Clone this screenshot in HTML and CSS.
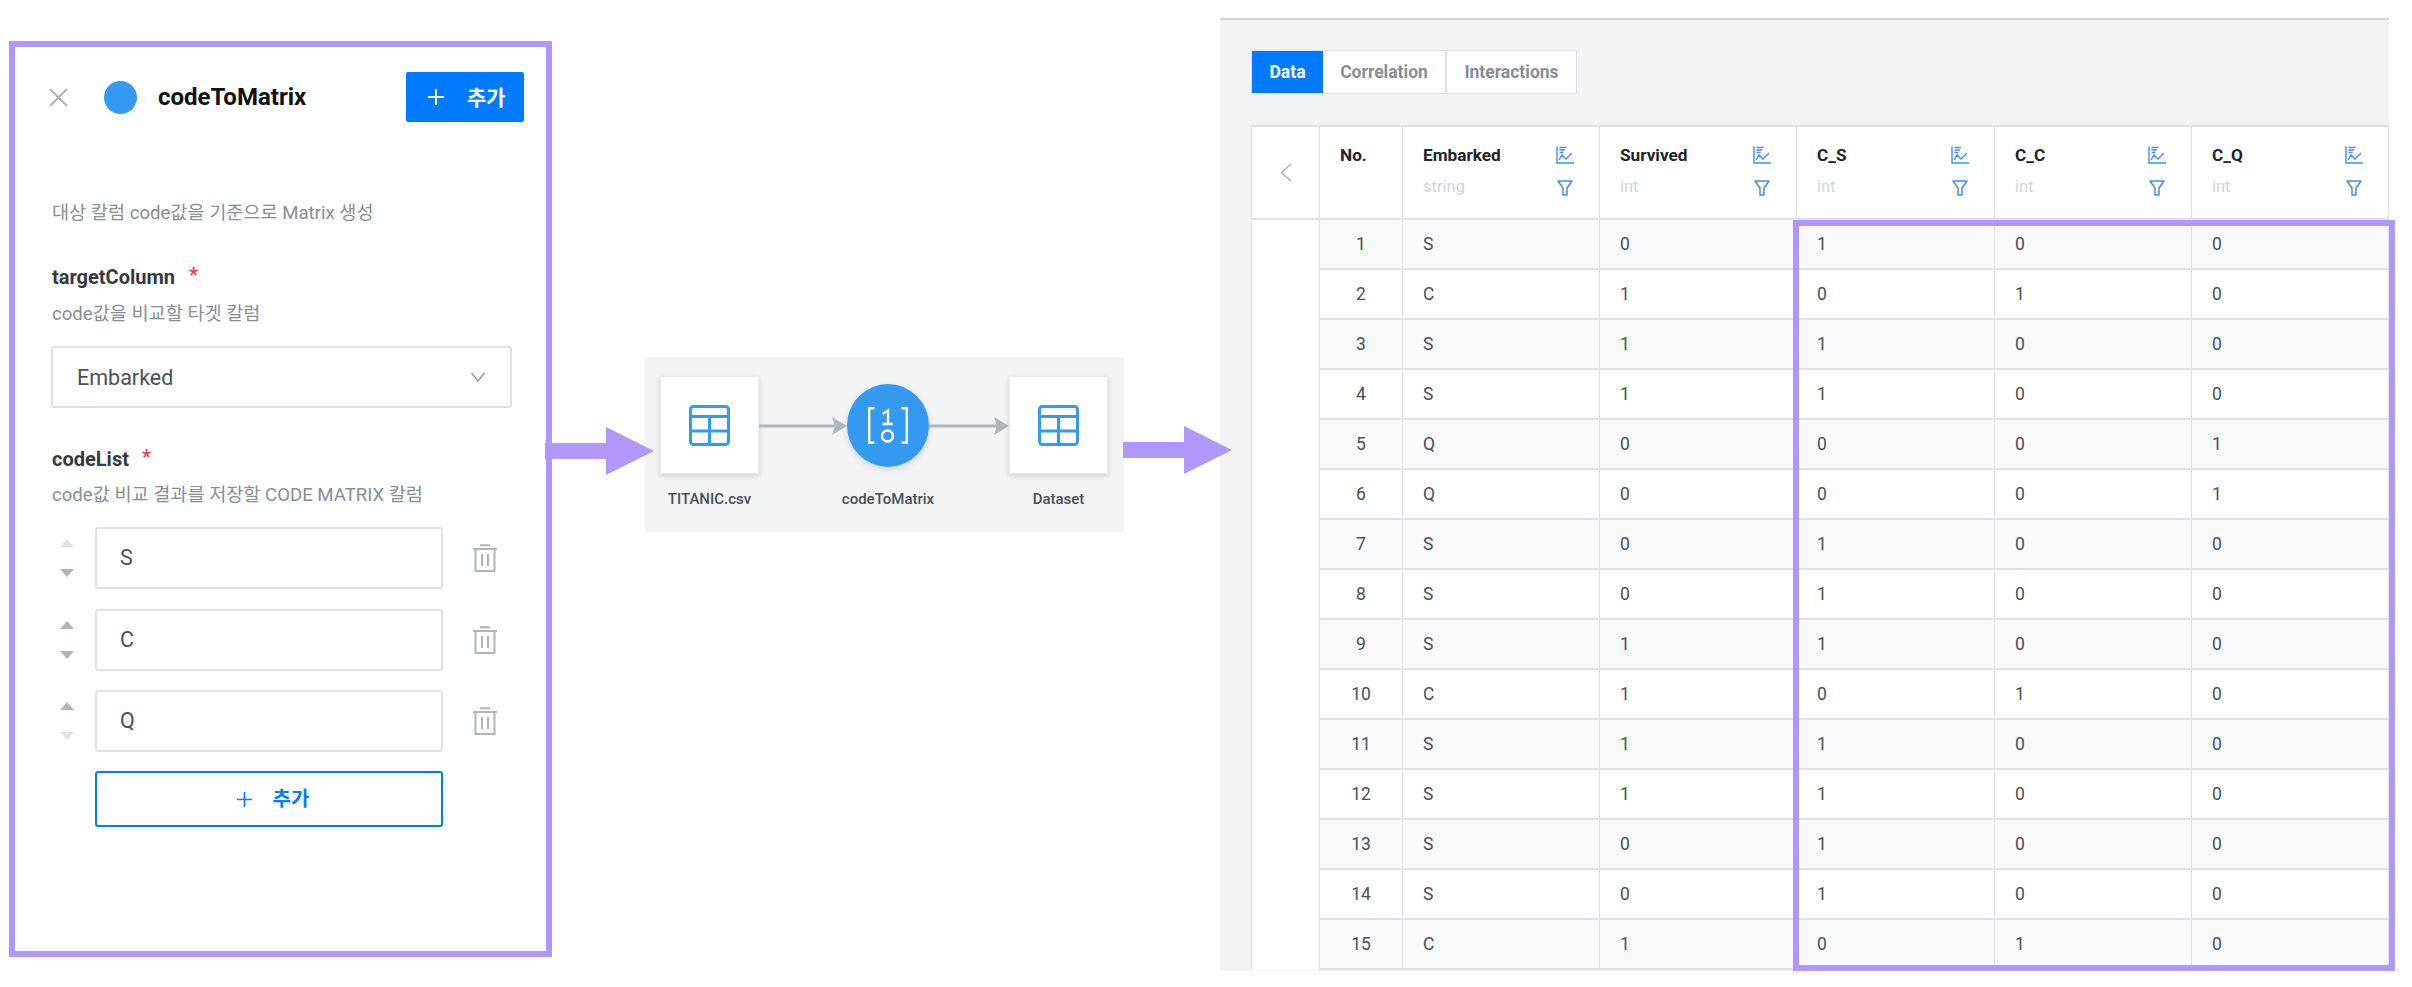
FILE: index.html
```html
<!DOCTYPE html>
<html lang="ko">
<head>
<meta charset="utf-8">
<title>codeToMatrix</title>
<link rel="stylesheet" href="styles.css">
</head>
<body>
<svg class="defs" width="0" height="0" aria-hidden="true">
  <symbol id="i-chart" viewBox="0 0 18 18"><path d="M1 .5V17H18M3.5 1.5H10M3.5 4H9M3.5 6.5H7.5M3 14L6 9L10 13L16 7" fill="none" stroke="currentColor" stroke-width="1.4"/></symbol>
  <symbol id="i-funnel" viewBox="0 0 16 16"><path d="M1 1H15L10 8V15H6V8Z" fill="none" stroke="currentColor" stroke-width="1.5" stroke-linejoin="round"/></symbol>
  <symbol id="i-trash" viewBox="0 0 24 28"><path d="M7 1.2H17M0 5H24M2.5 5V27H21.5V5M9 10V22M15 10V22" fill="none" stroke="currentColor" stroke-width="2"/></symbol>
  <symbol id="i-table" viewBox="0 0 41 41"><rect x="1.5" y="1.5" width="38" height="38" rx="3" fill="#fff" stroke="currentColor" stroke-width="3"/><path d="M1 11.5H40M1 26H40M20.5 11.5V40" fill="none" stroke="currentColor" stroke-width="3"/></symbol>
</svg>
<main class="canvas">
  <section class="panel">
    <header class="panel-head">
      <svg class="close" width="19" height="19" viewBox="0 0 19 19"><path d="M1 1L18 18M18 1L1 18" fill="none" stroke="#adb5bd" stroke-width="2.2"/></svg>
      <span class="dot"></span>
      <h1 class="title">codeToMatrix</h1>
      <button class="btn-primary"><svg width="16" height="16" viewBox="0 0 16 16"><path d="M8 0V16M0 8H16" stroke="#fff" stroke-width="2"/></svg><span class="btn-text">추가</span></button>
    </header>
    <p class="desc first">대상 칼럼 code값을 기준으로 Matrix 생성</p>
    <div class="label l1">targetColumn<span class="req r1">*</span></div>
    <p class="desc sub">code값을 비교할 타겟 칼럼</p>
    <div class="select"><span>Embarked</span><svg width="14" height="10" viewBox="0 0 14 10"><path d="M.5 1L7 9L13.5 1" fill="none" stroke="#868e96" stroke-width="1.3"/></svg></div>
    <div class="label l2">codeList<span class="req r2">*</span></div>
    <p class="desc sub s2">code값 비교 결과를 저장할 CODE MATRIX 칼럼</p>
    <div class="list">
      <div class="item">
        <div class="sort"><i class="up off"></i><i class="down"></i></div>
        <div class="input">S</div>
        <svg class="trash"><use href="#i-trash"/></svg>
      </div>
      <div class="item">
        <div class="sort"><i class="up"></i><i class="down"></i></div>
        <div class="input">C</div>
        <svg class="trash"><use href="#i-trash"/></svg>
      </div>
      <div class="item">
        <div class="sort"><i class="up"></i><i class="down off"></i></div>
        <div class="input">Q</div>
        <svg class="trash"><use href="#i-trash"/></svg>
      </div>
    </div>
    <button class="btn-outline"><svg width="15" height="15" viewBox="0 0 15 15"><path d="M7.5 0V15M0 7.5H15" stroke="#007bff" stroke-width="1.6"/></svg><span class="btn-text">추가</span></button>
  </section>

  <section class="flow">
    <div class="step">
      <div class="stage"><div class="node"><svg class="table-icon"><use href="#i-table"/></svg></div></div>
      <div class="step-label">TITANIC.csv</div>
    </div>
    <svg class="link" width="88" height="98" viewBox="0 0 88 98"><path d="M0 50H80" stroke="#adb5bd" stroke-width="3"/><path d="M88 50L73 41L76 50L73 59Z" fill="#adb5bd"/></svg>
    <div class="step mid">
      <div class="stage"><div class="circle">
        <svg width="40" height="37" viewBox="0 0 40 37"><path d="M6.5 1.2H1.2V35.8H6.5M33.5 1.2H38.8V35.8H33.5M14.5 7L20 3.5V17M14.5 17H25" fill="none" stroke="#fff" stroke-width="2.4"/><circle cx="19.5" cy="29" r="5.5" fill="none" stroke="#fff" stroke-width="2.4"/></svg>
      </div></div>
      <div class="step-label">codeToMatrix</div>
    </div>
    <svg class="link" width="80" height="98" viewBox="0 0 80 98"><path d="M0 50H72" stroke="#adb5bd" stroke-width="3"/><path d="M80 50L65 41L68 50L65 59Z" fill="#adb5bd"/></svg>
    <div class="step">
      <div class="stage"><div class="node"><svg class="table-icon"><use href="#i-table"/></svg></div></div>
      <div class="step-label">Dataset</div>
    </div>
  </section>

  <section class="result">
    <nav class="tabs">
      <span class="tab active">Data</span>
      <span class="tab t2">Correlation</span>
      <span class="tab t3">Interactions</span>
    </nav>
    <div class="grid">
      <div class="back-cell"><svg width="12" height="19" viewBox="0 0 12 19"><path d="M11 1L1.5 9.5L11 18" fill="none" stroke="#adb5bd" stroke-width="1.5"/></svg></div>
      <div class="hcell no">No.</div>
      <div class="hcell"><div class="hname">Embarked<small>string</small></div><div class="hicons"><svg class="ic-chart"><use href="#i-chart"/></svg><svg class="ic-funnel"><use href="#i-funnel"/></svg></div></div>
      <div class="hcell"><div class="hname">Survived<small>int</small></div><div class="hicons"><svg class="ic-chart"><use href="#i-chart"/></svg><svg class="ic-funnel"><use href="#i-funnel"/></svg></div></div>
      <div class="hcell"><div class="hname">C_S<small>int</small></div><div class="hicons"><svg class="ic-chart"><use href="#i-chart"/></svg><svg class="ic-funnel"><use href="#i-funnel"/></svg></div></div>
      <div class="hcell"><div class="hname">C_C<small>int</small></div><div class="hicons"><svg class="ic-chart"><use href="#i-chart"/></svg><svg class="ic-funnel"><use href="#i-funnel"/></svg></div></div>
      <div class="hcell"><div class="hname">C_Q<small>int</small></div><div class="hicons"><svg class="ic-chart"><use href="#i-chart"/></svg><svg class="ic-funnel"><use href="#i-funnel"/></svg></div></div>
      <div class="spacer"></div>
      <div class="rows">
        <div class="row"><span>1</span><span>S</span><span>0</span><span>1</span><span>0</span><span>0</span></div>
        <div class="row"><span>2</span><span>C</span><span>1</span><span>0</span><span>1</span><span>0</span></div>
        <div class="row"><span>3</span><span>S</span><span>1</span><span>1</span><span>0</span><span>0</span></div>
        <div class="row"><span>4</span><span>S</span><span>1</span><span>1</span><span>0</span><span>0</span></div>
        <div class="row"><span>5</span><span>Q</span><span>0</span><span>0</span><span>0</span><span>1</span></div>
        <div class="row"><span>6</span><span>Q</span><span>0</span><span>0</span><span>0</span><span>1</span></div>
        <div class="row"><span>7</span><span>S</span><span>0</span><span>1</span><span>0</span><span>0</span></div>
        <div class="row"><span>8</span><span>S</span><span>0</span><span>1</span><span>0</span><span>0</span></div>
        <div class="row"><span>9</span><span>S</span><span>1</span><span>1</span><span>0</span><span>0</span></div>
        <div class="row"><span>10</span><span>C</span><span>1</span><span>0</span><span>1</span><span>0</span></div>
        <div class="row"><span>11</span><span>S</span><span>1</span><span>1</span><span>0</span><span>0</span></div>
        <div class="row"><span>12</span><span>S</span><span>1</span><span>1</span><span>0</span><span>0</span></div>
        <div class="row"><span>13</span><span>S</span><span>0</span><span>1</span><span>0</span><span>0</span></div>
        <div class="row"><span>14</span><span>S</span><span>0</span><span>1</span><span>0</span><span>0</span></div>
        <div class="row"><span>15</span><span>C</span><span>1</span><span>0</span><span>1</span><span>0</span></div>
      </div>
    </div>
    <div class="highlight"></div>
  </section>

  <svg class="pointer p-left" width="109" height="48" viewBox="0 0 109 48"><path d="M0 16H61V0L109 24L61 48V32H0Z" fill="#b197fc"/></svg>
  <svg class="pointer p-right" width="109" height="48" viewBox="0 0 109 48"><path d="M0 16H61V0L109 24L61 48V32H0Z" fill="#b197fc"/></svg>
</main>
</body>
</html>
```
FILE: styles.css
```css
* { box-sizing: border-box; }
html, body { margin: 0; padding: 0; background: #fff; }
body {
  width: 2412px;
  height: 987px;
  overflow: hidden;
  font-family: Roboto, "Noto Sans CJK KR", "Noto Sans", sans-serif;
  color: #495057;
}
.defs { position: absolute; }
.canvas { position: relative; display: flex; align-items: flex-start; padding-left: 9px; height: 987px; }

/* left settings panel */
.panel {
  width: 543px;
  height: 916px;
  margin-top: 41px;
  padding: 25px 22px 0 37px;
  border: 6px solid #b197fc;
  flex: none;
}
.panel-head { display: flex; align-items: center; height: 50px; }
.close { margin-left: -3px; }
.dot { width: 33px; height: 33px; border-radius: 50%; background: #339af0; margin-left: 36px; }
.title { margin: 0 0 0 21px; font-size: 24px; font-weight: 700; color: #111; line-height: 30px; }
.btn-primary {
  margin-left: auto;
  width: 118px;
  height: 50px;
  background: #007bff;
  border: 0;
  border-radius: 2px;
  color: #fff;
  font: 700 21px Roboto, "Noto Sans CJK KR", sans-serif;
  display: flex;
  align-items: center;
  padding: 0 0 0 22px;
  gap: 23px;
}
.btn-text { padding-bottom: 3px; }
.desc { margin: 0; font-size: 18.6px; line-height: 24px; color: #868e96; white-space: nowrap; }
.desc.first { margin-top: 79px; }
.desc.sub { margin-top: 13px; }
.desc.s2 { margin-top: 12px; }
.label { font-size: 20px; font-weight: 700; line-height: 24px; color: #343a40; white-space: nowrap; }
.l1 { margin-top: 40px; }
.l2 { margin-top: 39px; }
.req { color: #f03e3e; font-weight: 700; position: relative; top: -2px; font-size: 20px; }
.r1 { margin-left: 14px; }
.r2 { margin-left: 13px; }
.select {
  margin: 20px 0 0 -1px;
  width: 461px;
  height: 62px;
  border: 2px solid #dee2e6;
  border-radius: 3px;
  padding: 0 25px 0 24px;
  display: flex;
  align-items: center;
  justify-content: space-between;
  font-size: 21.5px;
  color: #495057;
}
.list { margin-top: 20px; display: flex; flex-direction: column; gap: 19.5px; }
.item { display: flex; align-items: center; padding-left: 8px; }
.sort { width: 14px; display: flex; flex-direction: column; gap: 22px; }
.sort i { display: block; width: 0; height: 0; border-left: 7px solid transparent; border-right: 7px solid transparent; }
.up { border-bottom: 8px solid #adb5bd; }
.down { border-top: 8px solid #adb5bd; }
.up.off { border-bottom-color: #dee2e6; }
.down.off { border-top-color: #dee2e6; }
.input {
  margin-left: 21px;
  width: 348px;
  height: 62px;
  border: 2px solid #dee2e6;
  border-radius: 3px;
  padding-left: 23px;
  line-height: 58px;
  font-size: 21.5px;
}
.trash { margin-left: 30px; width: 24px; height: 28px; color: #adb5bd; }
.btn-outline {
  margin: 19px 0 0 43px;
  width: 348px;
  height: 56px;
  background: #fff;
  border: 2px solid #007bff;
  border-radius: 3px;
  color: #007bff;
  font: 700 20px Roboto, "Noto Sans CJK KR", sans-serif;
  display: flex;
  align-items: center;
  justify-content: center;
  padding: 0 0 0 8px;
  gap: 21px;
}

/* flow diagram */
.flow {
  flex: none;
  width: 479px;
  height: 175px;
  margin: 357px 0 0 93px;
  padding: 19px 16px 0 15px;
  background: #f1f3f5;
  display: flex;
}
.step { width: 99px; display: flex; flex-direction: column; align-items: center; }
.step.mid { width: 82px; }
.stage { height: 98px; display: flex; align-items: center; justify-content: center; }
.node {
  width: 99px;
  height: 98px;
  background: #fff;
  border: 1px solid #e9ecef;
  box-shadow: 0 2px 5px rgba(0, 0, 0, .14);
  display: flex;
  align-items: center;
  justify-content: center;
}
.table-icon { width: 41px; height: 41px; color: #339af0; }
.circle {
  width: 82px;
  height: 83px;
  border-radius: 50%;
  background: #339af0;
  box-shadow: 0 3px 6px rgba(0, 0, 0, .12);
  display: flex;
  align-items: center;
  justify-content: center;
}
.link { flex: none; }
.step-label { margin-top: 15px; font-size: 15px; line-height: 20px; font-weight: 500; color: #495057; white-space: nowrap; }

/* data panel */
.result {
  position: relative;
  flex: none;
  width: 1169px;
  height: 953px;
  margin: 18px 0 0 96px;
  padding: 30px 0 0 31px;
  background: #f1f3f5;
  border-top: 2px solid #ced4da;
}
.tabs { display: flex; width: 326px; height: 44px; background: #fff; border: 1px solid #dee2e6; border-radius: 2px; }
.tab { display: flex; align-items: center; justify-content: center; font-size: 17.5px; font-weight: 700; color: #868e96; }
.tab.active { width: 71px; background: #007bff; color: #fff; }
.t2 { width: 124px; border-right: 2px solid #dee2e6; }
.t3 { flex: 1; }
.grid {
  margin-top: 31px;
  display: grid;
  grid-template-columns: 68px 83px 197px 197px 198px 197px 197px;
  grid-template-rows: 93px 750px;
  width: 1138px;
  background: #fff;
  border-top: 2px solid #dee2e6;
  border-left: 1px solid #dee2e6;
}
.back-cell, .hcell {
  border-right: 1.5px solid #dee2e6;
  border-bottom: 2px solid #dee2e6;
}
.back-cell { display: flex; align-items: center; justify-content: center; }
.hcell { display: flex; justify-content: space-between; padding: 16px 25px 0 20px; font-size: 17.2px; font-weight: 700; line-height: 24px; color: #212529; }
.hcell.no { justify-content: flex-start; }
.hname small { display: block; margin-top: 8px; font-size: 16.5px; font-weight: 400; color: #ced4da; }
.hicons { width: 18px; padding-top: 3px; display: flex; flex-direction: column; align-items: center; gap: 16px; color: #3f8cff; }
.ic-chart { width: 18px; height: 18px; }
.ic-funnel { width: 16px; height: 16px; }
.spacer { border-right: 1.5px solid #dee2e6; }
.rows { grid-column: 2 / -1; }
.row {
  display: grid;
  grid-template-columns: 83px 197px 197px 198px 197px 197px;
  height: 50px;
  font-size: 17.5px;
  line-height: 48px;
  background: #fff;
}
.row:nth-child(odd) { background: #f8f9fa; }
.row span {
  padding-left: 20px;
  border-right: 1.5px solid #dee2e6;
  border-bottom: 2px solid #dee2e6;
}
.row span:first-child { padding-left: 0; text-align: center; }
.highlight {
  position: absolute;
  left: 573px;
  top: 200px;
  width: 602px;
  height: 751px;
  border: 6px solid #b197fc;
}

/* overlay arrows between the three panels */
.pointer { position: absolute; }
.p-left { left: 545px; top: 427px; }
.p-right { left: 1123px; top: 426px; }
```
